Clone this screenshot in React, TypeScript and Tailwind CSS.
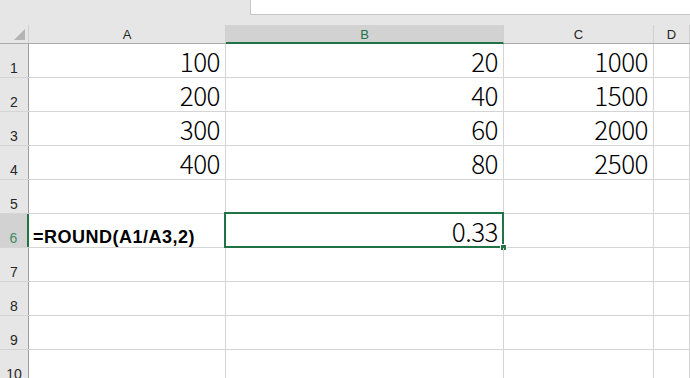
import React from 'react';

const cols = [
    { key: 'A', w: 'w-[197px]' },
    { key: 'B', w: 'w-[278px]' },
    { key: 'C', w: 'w-[150px]' },
    { key: 'D', w: 'flex-1' },
];

const data: Record<number, (string | null)[]> = {
    1: ['100', '20', '1000', null],
    2: ['200', '40', '1500', null],
    3: ['300', '60', '2000', null],
    4: ['400', '80', '2500', null],
};

const App = () => {
    const rows = [1, 2, 3, 4, 5, 6, 7, 8, 9, 10];
    const num = "ml-auto pr-[5px] pb-[3px] text-[26px] leading-none font-light tracking-[-0.5px] text-black font-['Noto_Sans_CJK_SC','Liberation_Sans',sans-serif]";

    return (
        <div className="w-[690px] h-[378px] overflow-hidden bg-white font-['Liberation_Sans',Arial,sans-serif] select-none">
            {/* top strip with formula box edge */}
            <div className="h-[25px] bg-[#e6e6e6] flex">
                <div className="w-[250px]" />
                <div className="flex-1 h-[15px] bg-white border-l border-b border-[#c6c6c6]" />
            </div>

            {/* column headers */}
            <div className="flex h-[19px] bg-[#e6e6e6] border-b border-[#ababab]">
                <div className="w-[29px] shrink-0 border-r border-[#d0d0d0] relative">
                    <div className="absolute left-[14px] top-[4px] w-0 h-0 border-l-[11px] border-l-transparent border-b-[11px] border-b-[#b4b4b4]" />
                </div>
                {cols.map((c) => (
                    <div
                        key={c.key}
                        className={`${c.w} shrink-0 flex items-center justify-center text-[13px] leading-none border-r border-[#d0d0d0] ${
                            c.key === 'B' ? 'bg-[#d2d2d2] text-[#217346] border-b-2 border-b-[#217346] -mb-[1px] pt-[1px]' : 'text-[#262626]'
                        }`}
                    >
                        {c.key}
                    </div>
                ))}
            </div>

            {/* grid rows */}
            {rows.map((r) => {
                const sel = r === 6;
                const vals = data[r] || [null, null, null, null];
                return (
                    <div key={r} className="flex h-[34px] border-b border-[#d4d4d4]">
                        <div
                            className={`w-[29px] shrink-0 flex items-end justify-center pb-[2px] text-[14px] leading-none ${
                                sel
                                    ? 'bg-[#d2d2d2] text-[#3f8a63] border-r-2 border-[#217346]'
                                    : 'bg-[#e6e6e6] text-[#262626] border-r border-[#9c9c9c]'
                            }`}
                        >
                            {r}
                        </div>
                        {cols.map((c, i) => (
                            <div key={c.key} className={`${c.w} shrink-0 relative border-r border-[#d4d4d4] flex items-end`}>
                                {sel && i === 0 && (
                                    <span className="pl-[4px] pb-[1px] text-[18px] font-bold leading-none tracking-[0.5px] text-black whitespace-nowrap">
                                        =ROUND(A1/A3,2)
                                    </span>
                                )}
                                {sel && i === 1 && (
                                    <>
                                        <span className={num}>0.33</span>
                                        <div className="absolute -left-[2px] -top-[2px] -right-[1px] -bottom-[1px] border-2 border-[#217346] pointer-events-none" />
                                        <div className="absolute -right-[4px] -bottom-[4px] w-[7px] h-[7px] bg-white p-[1px]">
                                            <div className="w-full h-full bg-[#217346]" />
                                        </div>
                                    </>
                                )}
                                {vals[i] && <span className={num}>{vals[i]}</span>}
                            </div>
                        ))}
                    </div>
                );
            })}
        </div>
    );
};

export default App;
